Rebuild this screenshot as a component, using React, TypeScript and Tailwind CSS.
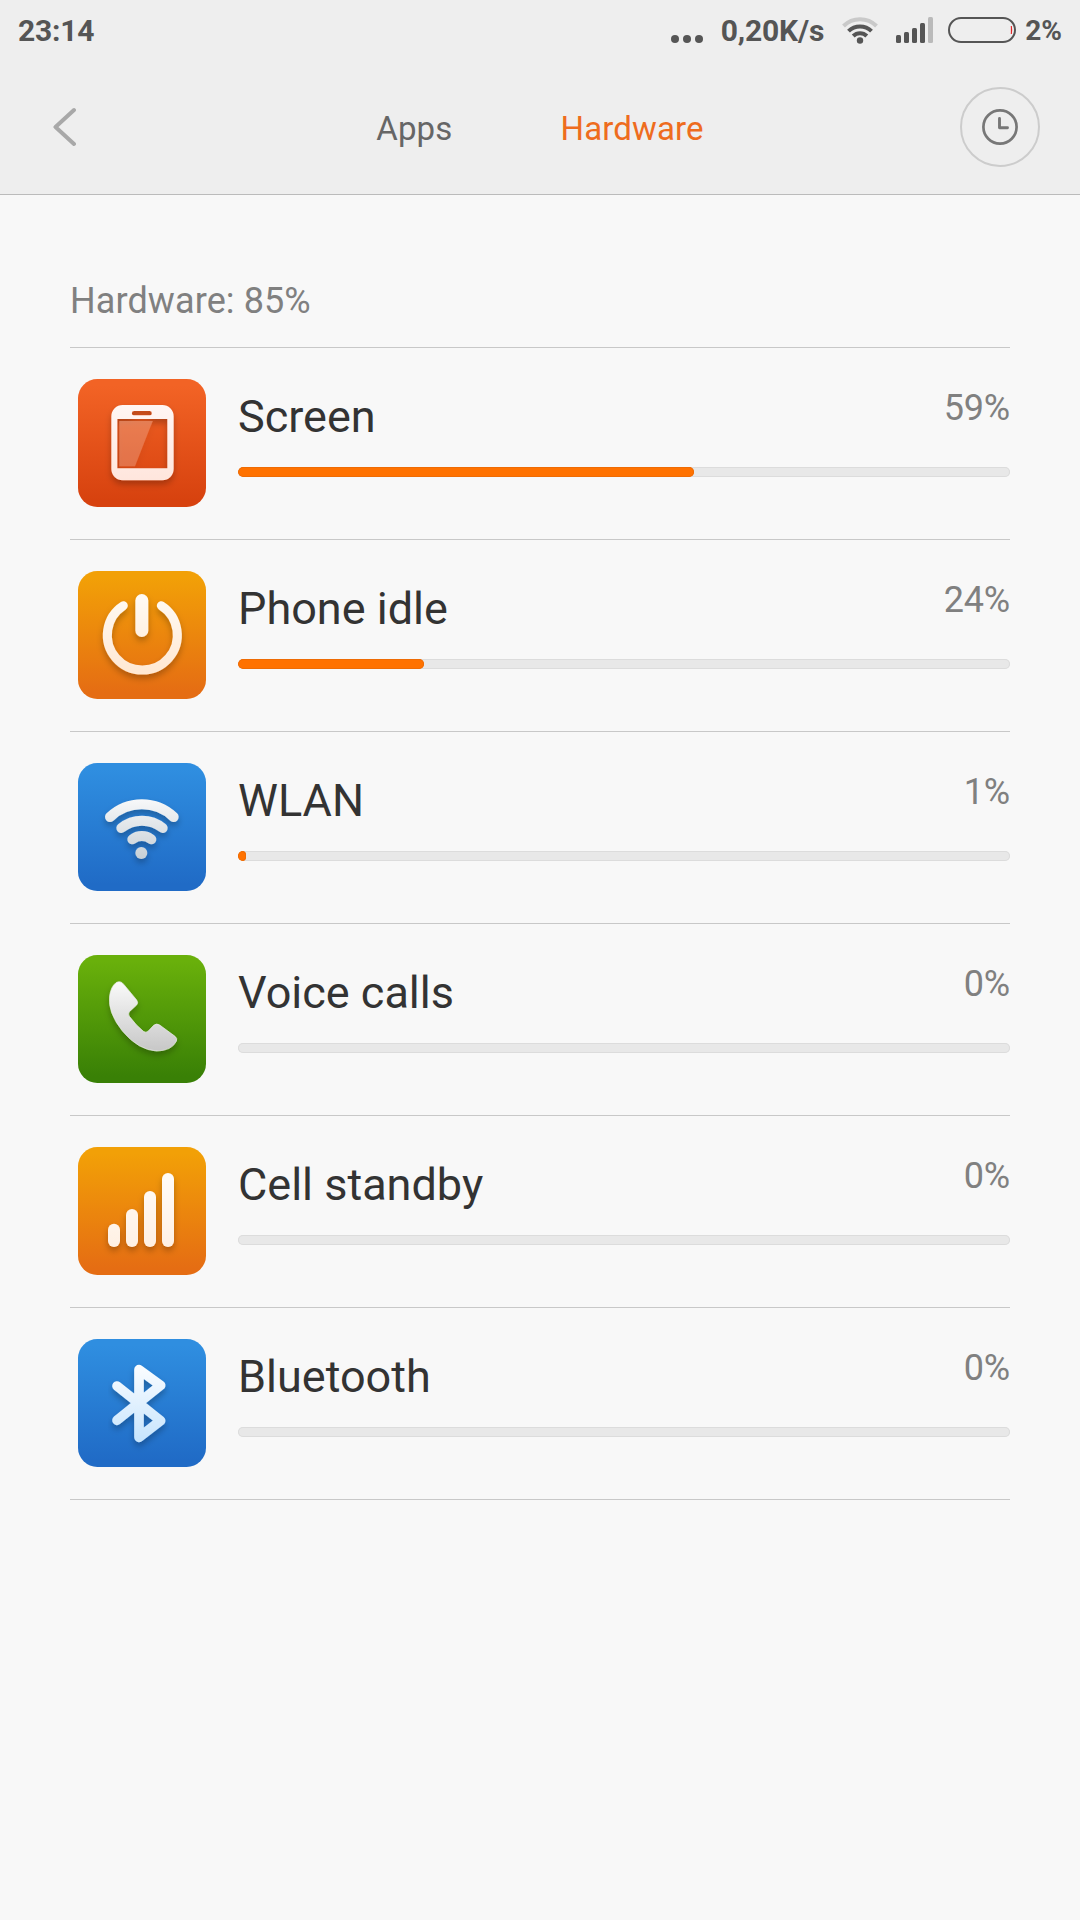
import type { ReactNode } from "react";

interface UsageItem {
  name: string;
  percent: number;
  icon: ReactNode;
}

interface TileProps {
  id: string;
  from: string;
  to: string;
  glyphFrom: string;
  glyphTo: string;
  children: ReactNode;
}

// Rounded app tile; the glyph inside picks up its fill from url(#<id>-glyph)
function Tile({ id, from, to, glyphFrom, glyphTo, children }: TileProps) {
  return (
    <svg viewBox="0 0 384 384" className="size-32 shrink-0">
      <defs>
        <linearGradient id={`${id}-bg`} x1="0" y1="0" x2="0" y2="1">
          <stop offset="0.05" stopColor={from} />
          <stop offset="0.95" stopColor={to} />
        </linearGradient>
        <linearGradient id={`${id}-glyph`} gradientUnits="userSpaceOnUse" x1="0" y1="80" x2="0" y2="300">
          <stop offset="0" stopColor={glyphFrom} />
          <stop offset="1" stopColor={glyphTo} />
        </linearGradient>
        <filter id={`${id}-shadow`} x="-20%" y="-20%" width="140%" height="150%">
          <feDropShadow dx="0" dy="12" stdDeviation="9" floodColor="#000" floodOpacity="0.25" />
        </filter>
      </defs>
      <rect width="384" height="384" rx="58" fill={`url(#${id}-bg)`} />
      <g filter={`url(#${id}-shadow)`}>{children}</g>
    </svg>
  );
}

function ScreenIcon() {
  return (
    <Tile id="screen" from="#f26325" to="#d7420f" glyphFrom="#fff6f3" glyphTo="#ffe6dd">
      <path
        fillRule="evenodd"
        fill="url(#screen-glyph)"
        d="M134 78H253a34 34 0 0 1 34 34V270a34 34 0 0 1-34 34H134a34 34 0 0 1-34-34V112a34 34 0 0 1 34-34ZM168 96a6 6 0 0 0 0 13h47a6 6 0 0 0 0-13ZM118 120V268H268V120Z"
      />
      <path d="M124 126H224L171 262H124Z" fill="#fff" fillOpacity="0.2" />
    </Tile>
  );
}

function IdleIcon() {
  return (
    <Tile id="idle" from="#f2a007" to="#e56d13" glyphFrom="#fffaf3" glyphTo="#ffe8d3">
      <path
        d="M136 104A105 105 0 1 0 250 104"
        fill="none"
        stroke="url(#idle-glyph)"
        strokeWidth="27"
        strokeLinecap="round"
      />
      <rect x="172" y="69" width="39" height="129" rx="19.5" fill="url(#idle-glyph)" />
    </Tile>
  );
}

function WlanIcon() {
  return (
    <Tile id="wlan" from="#2f8ee0" to="#206bc6" glyphFrom="#ffffff" glyphTo="#c3ccd3">
      <g fill="none" stroke="url(#wlan-glyph)" strokeWidth="30" strokeLinecap="round">
        <path d="M96 162A139 139 0 0 1 287 162" />
        <path d="M130 195A98 98 0 0 1 254 195" />
        <path d="M163 229A46 46 0 0 1 220 229" />
      </g>
      <circle cx="190" cy="270" r="18" fill="url(#wlan-glyph)" />
    </Tile>
  );
}

function CallIcon() {
  return (
    <Tile id="call" from="#69b00b" to="#398006" glyphFrom="#fafafa" glyphTo="#c4c4c4">
      <path
        fill="url(#call-glyph)"
        stroke="#eee"
        strokeWidth="2"
        d="M114 83Q128 75 138 89L176 135Q182 144 175 151L154 170Q149 177 154 184Q174 211 196 229Q204 235 211 228L227 211Q236 204 245 210L291 244Q299 250 295 259Q281 287 236 288Q181 285 134 229Q88 172 95 122Q99 95 114 83Z"
      />
    </Tile>
  );
}

function CellIcon() {
  return (
    <Tile id="cell" from="#f2a007" to="#e56d13" glyphFrom="#fffcf8" glyphTo="#fff0e3">
      <g fill="url(#cell-glyph)">
        <rect x="90" y="230" width="36" height="70" rx="18" />
        <rect x="144" y="186" width="36" height="114" rx="18" />
        <rect x="198" y="132" width="36" height="168" rx="18" />
        <rect x="252" y="78" width="36" height="222" rx="18" />
      </g>
    </Tile>
  );
}

function BluetoothIcon() {
  return (
    <Tile id="bt" from="#2f8ee0" to="#206bc6" glyphFrom="#fbfdff" glyphTo="#c8e5fd">
      <path
        d="M117 141L248 245L183 295V92L248 139L117 244"
        fill="none"
        stroke="url(#bt-glyph)"
        strokeWidth="29"
        strokeLinecap="round"
        strokeLinejoin="round"
      />
    </Tile>
  );
}

const items: UsageItem[] = [
  { name: "Screen", percent: 59.1, icon: <ScreenIcon /> },
  { name: "Phone idle", percent: 24.1, icon: <IdleIcon /> },
  { name: "WLAN", percent: 1, icon: <WlanIcon /> },
  { name: "Voice calls", percent: 0, icon: <CallIcon /> },
  { name: "Cell standby", percent: 0, icon: <CellIcon /> },
  { name: "Bluetooth", percent: 0, icon: <BluetoothIcon /> },
];

function StatusBar() {
  return (
    <div className="flex h-15 items-center justify-between px-[18px] text-[30px] leading-none font-bold text-[#555]">
      <span className="pt-0.5 tracking-[-0.2px]">23:14</span>
      <div className="flex items-center">
        <svg viewBox="0 0 32 27" className="mr-[18px] h-[27px] w-8 fill-current">
          <circle cx="4" cy="22" r="4" />
          <circle cx="16" cy="22" r="4" />
          <circle cx="28" cy="22" r="4" />
        </svg>
        <span className="pt-0.5 tracking-[-0.15px]">0,20K/s</span>
        <svg viewBox="0 0 36 27" className="ml-[18px] h-[27px] w-9" fill="none">
          <path d="M1.5 9A23.5 23.5 0 0 1 34.5 9" stroke="#c9c9c9" strokeWidth="4" />
          <path d="M6.5 14.2A16.3 16.3 0 0 1 29.5 14.2" stroke="#555" strokeWidth="4" />
          <path d="M11.2 19A9.7 9.7 0 0 1 24.8 19" stroke="#555" strokeWidth="4" />
          <circle cx="18" cy="23.5" r="3.2" fill="#555" />
        </svg>
        <svg viewBox="0 0 37 26" className="ml-[18px] h-[26px] w-[37px]" fill="#555">
          <rect x="0" y="18" width="5" height="8" rx="1.5" />
          <rect x="8" y="15" width="5" height="11" rx="1.5" />
          <rect x="16" y="11" width="5" height="15" rx="1.5" />
          <rect x="24" y="6" width="5" height="20" rx="1.5" />
          <rect x="32" y="0" width="5" height="26" rx="1.5" fill="#bababa" />
        </svg>
        <svg viewBox="0 0 68 26" className="mr-[9px] ml-[15px] h-[26px] w-[68px]" fill="none">
          <rect x="1" y="1" width="66" height="24" rx="12" stroke="#555" strokeWidth="2" />
          <path d="M63.3 9Q64.3 13 63.3 17Z" fill="#d00" stroke="#d00" strokeWidth="0.6" />
        </svg>
        <span className="pt-0.5 text-[28px]">2%</span>
      </div>
    </div>
  );
}

function Header() {
  return (
    <header className="h-[195px] border-b border-[#bbb] bg-[#eee]">
      <StatusBar />
      <nav className="flex h-[134px] items-center justify-between pr-10 pb-[1px] pl-[52px]">
        <button className="flex w-[68px]">
          <svg viewBox="0 0 24 40" className="h-10 w-6" fill="none">
            <path
              d="M22 3L3.5 20L22 37"
              stroke="#a8a8a8"
              strokeWidth="4"
              strokeLinecap="round"
              strokeLinejoin="round"
            />
          </svg>
        </button>
        <div className="flex gap-[108px] pt-1 text-[33px] tracking-[0.15px] text-[#666]">
          <button>Apps</button>
          <button className="text-[#ee6c1e]">Hardware</button>
        </div>
        <button className="flex size-20 items-center justify-center rounded-full border-2 border-[#ccc]">
          <svg viewBox="0 0 36 36" className="size-9" fill="none" stroke="#777">
            <circle cx="18" cy="18" r="16.6" strokeWidth="2.7" />
            <path d="M17.5 9.5V18.7H25.5" strokeWidth="2.9" strokeLinecap="round" strokeLinejoin="round" />
          </svg>
        </button>
      </nav>
    </header>
  );
}

function UsageRow({ name, percent, icon }: UsageItem) {
  return (
    <li className="flex h-48 gap-8 border-b border-[#c8c8c8] pt-[31px] pl-2">
      {icon}
      <div className="flex-1">
        <div className="flex h-[88px] justify-between">
          <span className="pt-[11px] text-[45px] leading-[54px] text-[#333]">{name}</span>
          <span className="pt-2 text-[36px] leading-[42px] tracking-[-0.2px] text-[#808080]">
            {Math.round(percent)}%
          </span>
        </div>
        <div className="h-2.5 overflow-hidden rounded-full bg-[#e8e8e8] inset-ring inset-ring-[#dcdcdc]">
          {percent > 0 && (
            <div
              className="h-full rounded-full bg-[#ff7200] inset-ring inset-ring-[#ee6c05]"
              style={{ width: `${percent}%` }}
            />
          )}
        </div>
      </div>
    </li>
  );
}

export default function App() {
  return (
    <div className="min-h-screen bg-[#f8f8f8] font-[Roboto,sans-serif]">
      <Header />
      <main className="px-[70px]">
        <h2 className="h-[153px] border-b border-[#c8c8c8] pt-[85px] text-[36px] leading-[42px] tracking-[0.1px] text-[#808080]">
          Hardware: 85%
        </h2>
        <ul>
          {items.map((item) => (
            <UsageRow key={item.name} {...item} />
          ))}
        </ul>
      </main>
    </div>
  );
}
